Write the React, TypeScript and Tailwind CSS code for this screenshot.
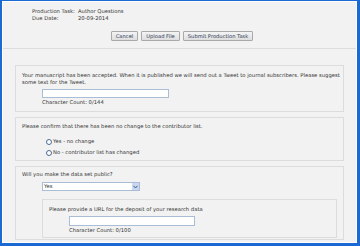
import React from "react";

const btn =
  "h-[10px] px-[4px] border border-[#a9a9a9] bg-gradient-to-b from-[#f4f4f4] to-[#dedede] text-[#2d3a57] text-[5.2px] leading-[8px] rounded-[1px]";

export default function App() {
  return (
    <div
      className="w-[360px] h-[246px] border-[#1b6ad3] border-l-[2px] border-t-[1px] border-r-[3px] border-b-[3px] overflow-hidden"
      style={{ fontFamily: '"DejaVu Sans", Verdana, sans-serif' }}
    >
      <div className="w-full h-full border border-white bg-[#f2f2f2] text-[5.25px] leading-[7px] text-[#333]">
        <div className="h-[47px] border-b border-[#dcdcdc] flex flex-col">
          <div className="pl-[29px] pt-[6px] grid grid-cols-[46px_auto] w-fit">
            <span>Production Task:</span>
            <span>Author Questions</span>
            <span>Due Date:</span>
            <span>20-09-2014</span>
          </div>
          <div className="flex justify-center gap-[3px] mt-[9px] pl-[5px]">
            <button className={btn}>Cancel</button>
            <button className={btn}>Upload File</button>
            <button className={btn}>Submit Production Task</button>
          </div>
        </div>
        <div className="px-[12px] pt-[16px] flex flex-col gap-[5px]">
          <div className="border border-[#dcdcdc] h-[47px] pl-[6px] pt-[6px]">
            <p className="whitespace-nowrap">
              Your manuscript has been accepted. When it is published we will send out a Tweet to journal subscribers. Please suggest
              <br />
              some text for the Tweet.
            </p>
            <div className="pl-[20px] pt-[3px]">
              <div className="w-[127px] h-[9px] bg-white border border-[#a9bdd6]" />
              <div className="pt-[1px]">Character Count: 0/144</div>
            </div>
          </div>
          <div className="border border-[#dcdcdc] h-[44px] pl-[6px] pt-[5px]">
            <p>Please confirm that there has been no change to the contributor list.</p>
            <div className="pl-[24px] pt-[8px] flex flex-col gap-[4px]">
              <label className="flex items-center gap-[1px]">
                <span className="inline-block w-[6px] h-[6px] rounded-full border border-[#4a6b96] bg-white" />
                <span>Yes - no change</span>
              </label>
              <label className="flex items-center gap-[1px]">
                <span className="inline-block w-[6px] h-[6px] rounded-full border border-[#4a6b96] bg-white" />
                <span>No - contributor list has changed</span>
              </label>
            </div>
          </div>
          <div className="border border-[#dcdcdc] h-[74px] pl-[6px] pt-[4px]">
            <p>Will you make the data set public?</p>
            <div className="pl-[20px] pt-[4px] pr-[6px]">
              <div className="w-[98px] h-[9px] bg-white border border-[#a9bdd6] flex items-center justify-between pl-[1px]">
                <span>Yes</span>
                <span className="w-[7px] h-[7px] bg-[#c9d8ee] flex items-center justify-center">
                  <svg width="5" height="4" viewBox="0 0 5 4">
                    <path d="M0.5 0.8 L2.5 3 L4.5 0.8" stroke="#3b5b8c" strokeWidth="1" fill="none" />
                  </svg>
                </span>
              </div>
              <div className="mt-[8px] border border-[#dcdcdc] h-[39px] pl-[6px] pt-[6px]">
                <p>Please provide a URL for the deposit of your research data</p>
                <div className="pl-[20px] pt-[3px]">
                  <div className="w-[126px] h-[10px] bg-white border border-[#a9bdd6]" />
                  <div className="pt-[1px]">Character Count: 0/100</div>
                </div>
              </div>
            </div>
          </div>
        </div>
      </div>
    </div>
  );
}
